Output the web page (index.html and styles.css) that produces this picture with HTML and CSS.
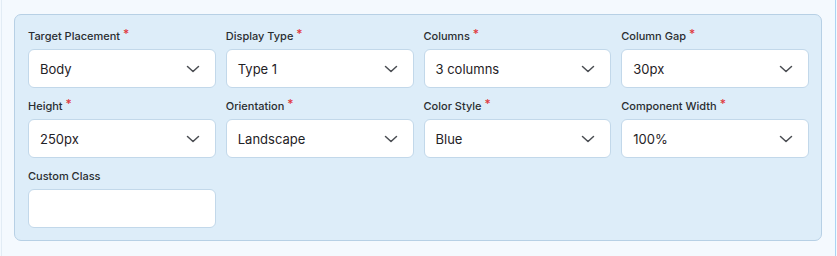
FILE: index.html
```html
<!DOCTYPE html>
<html lang="en">
<head>
  <meta charset="UTF-8" />
  <title>Component Settings</title>
  <meta name="viewport" content="width=device-width, initial-scale=1" />
  <link rel="stylesheet" href="styles.css">
</head>
<body>
  <div class="card">
    <div class="panel">
      <div class="field">
        <label>Target Placement <span class="req">*</span></label>
        <div class="select"><span>Body</span><svg viewBox="0 0 14 8"><path d="M1.5 1.5 L7 6.5 L12.5 1.5" /></svg></div>
      </div>
      <div class="field">
        <label>Display Type <span class="req">*</span></label>
        <div class="select"><span>Type 1</span><svg viewBox="0 0 14 8"><path d="M1.5 1.5 L7 6.5 L12.5 1.5" /></svg></div>
      </div>
      <div class="field">
        <label>Columns <span class="req">*</span></label>
        <div class="select"><span>3 columns</span><svg viewBox="0 0 14 8"><path d="M1.5 1.5 L7 6.5 L12.5 1.5" /></svg></div>
      </div>
      <div class="field">
        <label>Column Gap <span class="req">*</span></label>
        <div class="select"><span>30px</span><svg viewBox="0 0 14 8"><path d="M1.5 1.5 L7 6.5 L12.5 1.5" /></svg></div>
      </div>

      <div class="field">
        <label>Height <span class="req">*</span></label>
        <div class="select"><span>250px</span><svg viewBox="0 0 14 8"><path d="M1.5 1.5 L7 6.5 L12.5 1.5" /></svg></div>
      </div>
      <div class="field">
        <label>Orientation <span class="req">*</span></label>
        <div class="select"><span>Landscape</span><svg viewBox="0 0 14 8"><path d="M1.5 1.5 L7 6.5 L12.5 1.5" /></svg></div>
      </div>
      <div class="field">
        <label>Color Style <span class="req">*</span></label>
        <div class="select"><span>Blue</span><svg viewBox="0 0 14 8"><path d="M1.5 1.5 L7 6.5 L12.5 1.5" /></svg></div>
      </div>
      <div class="field">
        <label>Component Width <span class="req">*</span></label>
        <div class="select"><span>100%</span><svg viewBox="0 0 14 8"><path d="M1.5 1.5 L7 6.5 L12.5 1.5" /></svg></div>
      </div>

      <div class="field">
        <label for="customClass">Custom Class</label>
        <input type="text" id="customClass" />
      </div>
    </div>
  </div>
</body>
</html>
```

FILE: styles.css
```css
body {
  margin: 0;
  background: #f4f9fe;
  font-family: Inter, "Noto Sans", sans-serif;
  color: #222;
}
.card {
  margin-left: 1px;
  width: 835px;
  min-height: 256px;
  box-sizing: border-box;
  padding: 14px 13px 0 12px;
  border-left: 1px solid #e2ecf5;
  border-right: 1px solid #acd3f2;
}
.panel {
  display: grid;
  grid-template-columns: repeat(4, 1fr);
  column-gap: 10px;
  row-gap: 10px;
  padding: 13px 12px 12px 13px;
  background: #ddedf9;
  border: 1px solid #b7d0e5;
  border-radius: 7px;
}
.field label {
  display: block;
  font-size: 11px;
  line-height: 16px;
  font-weight: 500;
  color: #2a2d31;
  margin-bottom: 5px;
}
.req {
  color: #e0393e;
  font-size: 12px;
  vertical-align: 2px;
  line-height: 0;
}
.select,
.field input {
  height: 39px;
  box-sizing: border-box;
  background: #fff;
  border: 1px solid #c2d8ea;
  border-radius: 6px;
}
.select {
  display: flex;
  align-items: center;
  justify-content: space-between;
  padding: 0 15px 0 11px;
  font-size: 13px;
  color: #1f2226;
}
.select svg {
  width: 14px;
  height: 8px;
  fill: none;
  stroke: #4a4d52;
  stroke-width: 1.5;
  stroke-linecap: round;
  stroke-linejoin: round;
}
.field input {
  width: 100%;
  display: block;
  padding: 0 11px;
  font-family: inherit;
  font-size: 13px;
}
```
